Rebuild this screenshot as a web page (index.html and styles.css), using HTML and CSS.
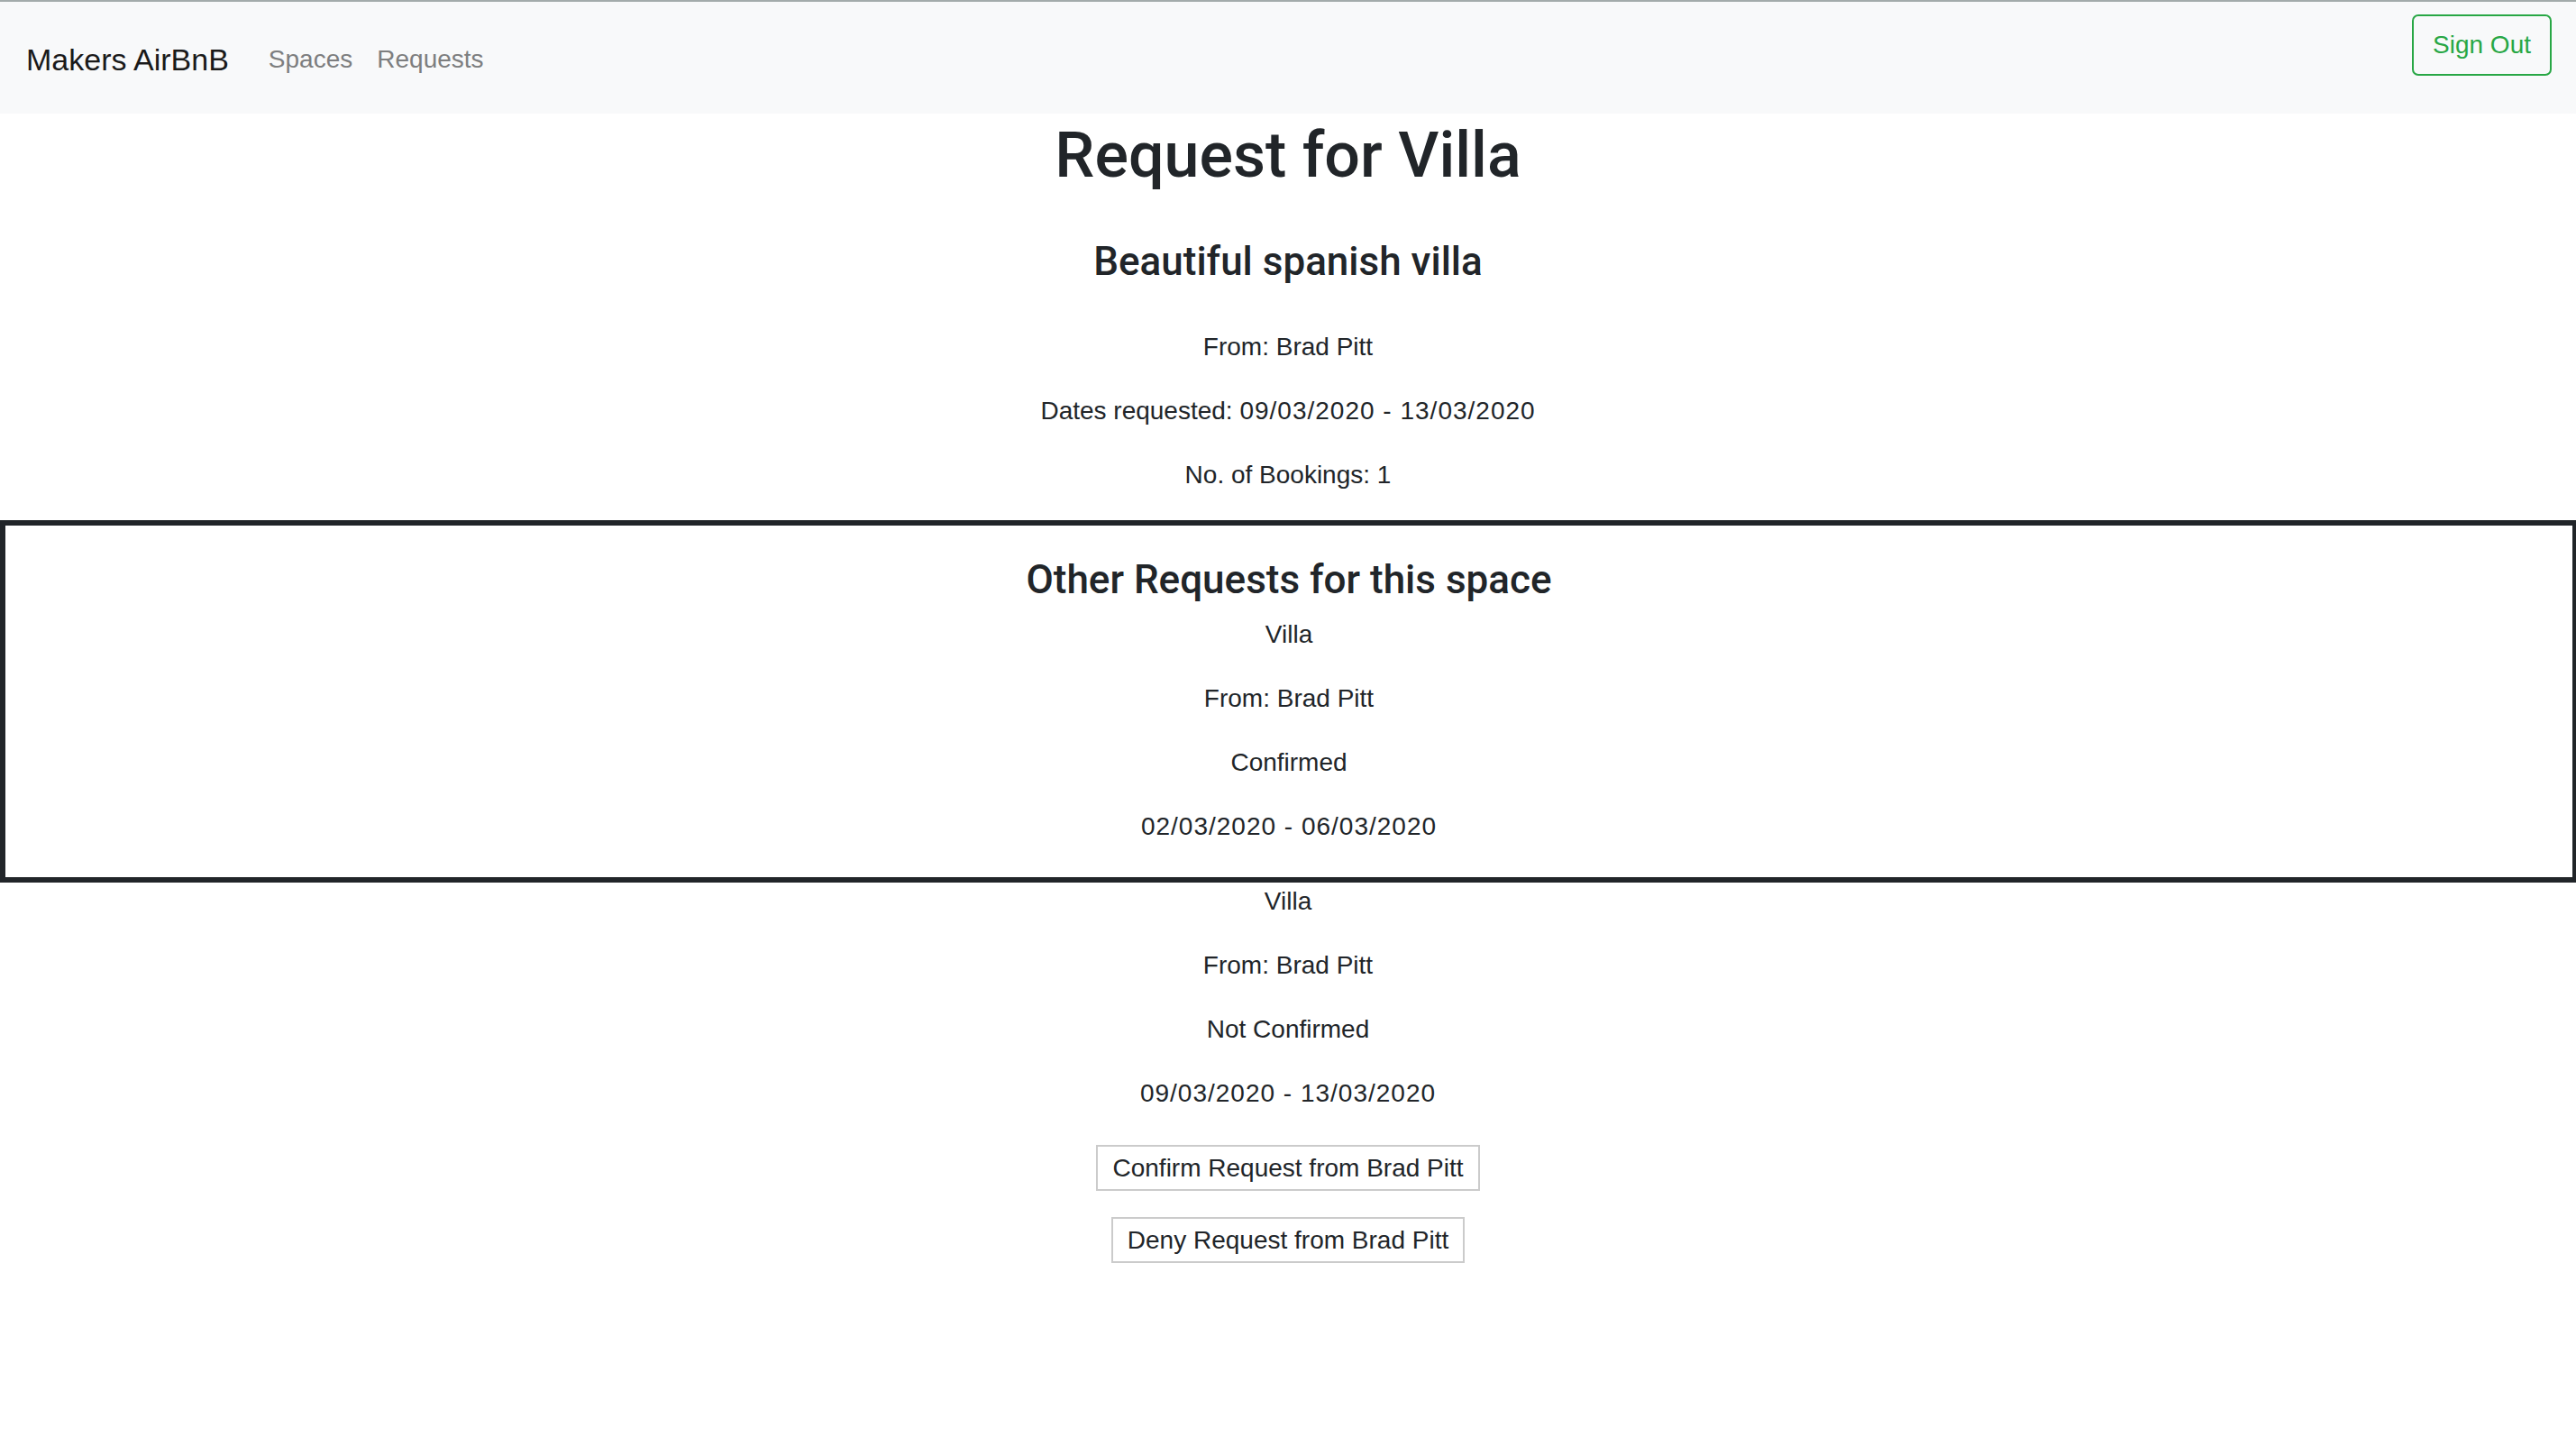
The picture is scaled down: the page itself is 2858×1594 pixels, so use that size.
FILE: index.html
```html
<!DOCTYPE html>
<html lang="en">
<head>
<meta charset="utf-8">
<title>Makers AirBnB</title>
<link rel="stylesheet" href="styles.css">
</head>
<body>
<nav class="navbar">
  <div class="nav-left">
    <a class="brand" href="#">Makers AirBnB</a>
    <a class="nav-link" href="#">Spaces</a>
    <a class="nav-link" href="#">Requests</a>
  </div>
  <button class="btn-signout" type="button">Sign Out</button>
</nav>
<main class="content">
  <h1 class="title">Request for Villa</h1>
  <h3 class="subtitle">Beautiful spanish villa</h3>
  <div class="info info-main">
    <p>From: Brad Pitt</p>
    <p>Dates requested: <span class="dates">09/03/2020 - 13/03/2020</span></p>
    <p>No. of Bookings: 1</p>
  </div>
  <section class="other-box">
    <h3 class="box-title">Other Requests for this space</h3>
    <div class="info">
      <p>Villa</p>
      <p>From: Brad Pitt</p>
      <p>Confirmed</p>
      <p><span class="dates">02/03/2020 - 06/03/2020</span></p>
    </div>
  </section>
  <div class="info">
    <p>Villa</p>
    <p>From: Brad Pitt</p>
    <p>Not Confirmed</p>
    <p><span class="dates">09/03/2020 - 13/03/2020</span></p>
  </div>
  <div class="actions">
    <button class="action-btn" type="button">Confirm Request from Brad Pitt</button>
    <button class="action-btn" type="button">Deny Request from Brad Pitt</button>
  </div>
</main>
</body>
</html>
```
FILE: styles.css
```css
* { box-sizing: border-box; }

html, body {
  margin: 0;
  padding: 0;
  background: #ffffff;
}

body {
  border-top: 2px solid #a3abab;
  font-family: "Liberation Sans", Arial, sans-serif;
  font-size: 28px;
  color: #212529;
}

.navbar {
  display: flex;
  justify-content: space-between;
  align-items: flex-start;
  height: 124px;
  padding: 0 27px 0 29px;
  background: #f8f9fa;
}

.nav-left {
  display: flex;
  align-items: center;
  height: 128px;
}

.brand {
  font-size: 34px;
  color: #1a1a1a;
  text-decoration: none;
  margin-right: 44px;
}

.nav-link {
  font-size: 28px;
  color: #7d7e7f;
  text-decoration: none;
  margin-right: 27px;
}

.btn-signout {
  margin-top: 14px;
  height: 68px;
  padding: 0 21px;
  background: transparent;
  border: 2px solid #28a745;
  border-radius: 7px;
  color: #28a745;
  font-family: "Liberation Sans", Arial, sans-serif;
  font-size: 28px;
}

.content {
  text-align: center;
}

.title {
  margin: 4px 0 0;
  font-family: Roboto, "Liberation Sans", sans-serif;
  font-weight: 500;
  font-size: 70px;
  line-height: 84px;
}

.subtitle {
  margin: 50px 0 0;
  font-family: Roboto, "Liberation Sans", sans-serif;
  font-weight: 500;
  font-size: 44px;
  line-height: 53px;
}

.info p {
  margin: 0 0 29px;
  line-height: 42px;
}

.dates {
  letter-spacing: 1px;
}

.info-main {
  margin-top: 47px;
  margin-bottom: 28px;
}

.other-box {
  border: 6px solid #212529;
  border-right-width: 4px;
  padding: 34px 0 6px;
}

.box-title {
  margin: 0 0 13px;
  font-family: Roboto, "Liberation Sans", sans-serif;
  font-weight: 500;
  font-size: 44px;
  line-height: 53px;
}

.actions {
  display: flex;
  flex-direction: column;
  align-items: center;
  gap: 29px;
  margin-top: 36px;
}

.action-btn {
  height: 51px;
  padding: 0 16px;
  background: #ffffff;
  border: 2px solid #cbcbcb;
  border-radius: 0;
  color: #212529;
  font-family: "Liberation Sans", Arial, sans-serif;
  font-size: 28px;
}
```
